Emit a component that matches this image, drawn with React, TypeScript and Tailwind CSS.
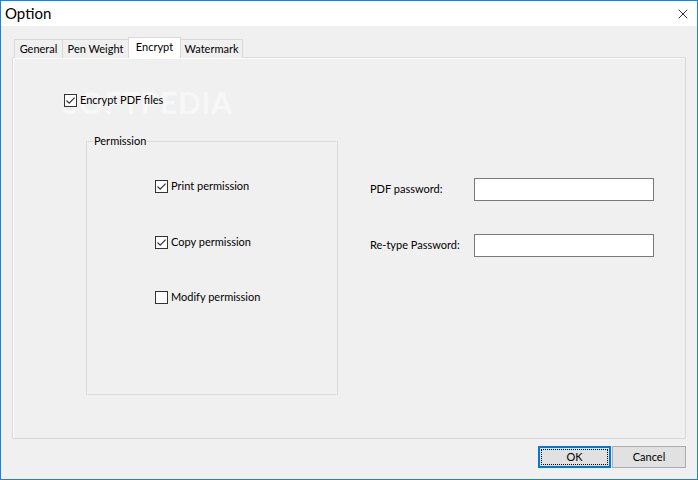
import { X } from 'lucide-react';

function Check({ checked }: { checked: boolean }) {
  return (
    <span className="w-[13px] h-[13px] border border-[#333333] bg-white flex items-center justify-center shrink-0">
      {checked && (
        <svg width="11" height="11" viewBox="0 0 11 11">
          <path d="M1.5 5.5 L4.2 8.2 L9.6 2.6" fill="none" stroke="#333333" strokeWidth="1.2" />
        </svg>
      )}
    </span>
  );
}

function CheckRow({ checked, label }: { checked: boolean; label: string }) {
  return (
    <label className="flex items-center gap-[3px] h-[14px]">
      <Check checked={checked} />
      <span>{label}</span>
    </label>
  );
}

const tabs = [
  { name: 'General', w: 'w-[49px]' },
  { name: 'Pen Weight', w: 'w-[67px]' },
  { name: 'Encrypt', w: 'w-[53px]' },
  { name: 'Watermark', w: 'w-[63px]' },
];

export default function App() {
  return (
    <div
      className="w-[698px] h-[480px] flex flex-col bg-[#f0f0f0] border border-[#1883d7] text-[11px] text-[#000000] overflow-hidden"
      style={{ fontFamily: 'Lato, "Noto Sans", sans-serif' }}
    >
      {/* title bar */}
      <div className="h-[25px] bg-white flex items-center justify-between shrink-0">
        <span className="pl-[4px] text-[15px] leading-none">Option</span>
        <X className="w-[16px] h-[16px] mr-[6px] text-black" strokeWidth={1.2} />
      </div>

      <div className="flex-1 flex flex-col px-[11px] pt-[11px]">
        {/* tabs */}
        <div className="flex items-end h-[21px] pl-[2px] relative z-10">
          {tabs.map((t) =>
            t.name === 'Encrypt' ? (
              <div
                key={t.name}
                className={`${t.w} h-[21px] bg-white border border-[#d9d9d9] border-b-0 -ml-[1px] flex items-center justify-center pb-[2px]`}
              >
                {t.name}
              </div>
            ) : (
              <div
                key={t.name}
                className={`${t.w} h-[19px] bg-[#f0f0f0] border border-[#d9d9d9] border-b-0 -ml-[1px] first:ml-0 flex items-center justify-center`}
              >
                {t.name}
              </div>
            )
          )}
        </div>

        {/* panel */}
        <div className="h-[382px] -mt-[1px] border border-[#d9d9d9] shadow-[inset_1px_1px_0_#ffffff] bg-[#f0f0f0] relative">
          <div className="absolute left-[49px] top-[22px] text-[30px] font-bold tracking-wide text-white/50 select-none pointer-events-none">
            SOFTPEDIA
          </div>
          <div className="relative pl-[51px] pt-[35px]">
            <CheckRow checked label="Encrypt PDF files" />
          </div>

          <div className="flex pl-[73px] pt-[34px]">
            <div className="w-[252px] h-[254px] border border-[#dcdcdc] pl-[68px] pt-[37px] relative">
              <span className="absolute left-[6px] -top-[8px] px-[1px] bg-[#f0f0f0] leading-[14px]">Permission</span>
              <div className="flex flex-col gap-[42px]">
                <CheckRow checked label="Print permission" />
                <CheckRow checked label="Copy permission" />
                <div className="-mt-[1px]">
                  <CheckRow checked={false} label="Modify permission" />
                </div>
              </div>
            </div>

            <div className="flex flex-col gap-[33px] pl-[32px] pt-[37px]">
              <div className="flex items-center">
                <span className="w-[104px]">PDF password:</span>
                <input type="password" className="w-[180px] h-[23px] bg-white border border-[#7a7a7a] outline-none" />
              </div>
              <div className="flex items-center">
                <span className="w-[104px]">Re-type Password:</span>
                <input type="password" className="w-[180px] h-[23px] bg-white border border-[#7a7a7a] outline-none" />
              </div>
            </div>
          </div>
        </div>

        {/* buttons */}
        <div className="flex justify-end gap-[1px] pt-[7px]">
          <button className="w-[73px] h-[22px] bg-[#e1e1e1] border-2 border-[#0078d7] p-[1px]">
            <span className="w-full h-full border border-dotted border-black flex items-center justify-center">OK</span>
          </button>
          <button className="w-[74px] h-[22px] bg-[#e1e1e1] border border-[#adadad] flex items-center justify-center">
            Cancel
          </button>
        </div>
      </div>
    </div>
  );
}
